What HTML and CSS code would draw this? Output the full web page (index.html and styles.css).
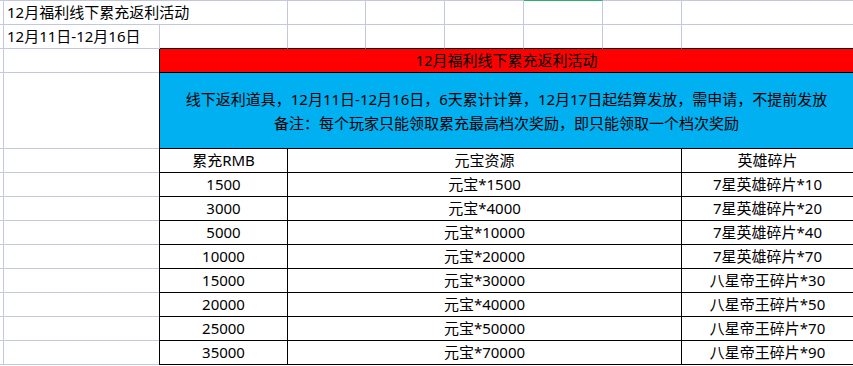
FILE: index.html
```html
<!DOCTYPE html>
<html lang="zh-CN">
<head>
<meta charset="utf-8">
<title>12月福利线下累充返利活动</title>
<link rel="stylesheet" href="styles.css">
</head>
<body>
<div class="sheet">
  <div class="row r1">
    <div class="c gut"></div>
    <div class="c ab txt">12月福利线下累充返利活动</div>
    <div class="c wc"></div>
    <div class="c wd"></div>
    <div class="c wd"></div>
    <div class="c wd sel"></div>
    <div class="c wd"></div>
    <div class="c wh"></div>
  </div>
  <div class="row r2">
    <div class="c gut"></div>
    <div class="c wa txt">12月11日-12月16日</div>
    <div class="c wb blk"></div>
    <div class="c wc blk"></div>
    <div class="c wd blk"></div>
    <div class="c wd blk"></div>
    <div class="c wd blk"></div>
    <div class="c wd blk"></div>
    <div class="c wh blk"></div>
  </div>
  <div class="lower">
    <div class="leftcol">
      <div class="lrow h24"><div class="c gut"></div><div class="c la"></div></div>
      <div class="lrow h76"><div class="c gut"></div><div class="c la"></div></div>
      <div class="lrow h24"><div class="c gut"></div><div class="c la"></div></div>
      <div class="lrow h24"><div class="c gut"></div><div class="c la"></div></div>
      <div class="lrow h24"><div class="c gut"></div><div class="c la"></div></div>
      <div class="lrow h24"><div class="c gut"></div><div class="c la"></div></div>
      <div class="lrow h24"><div class="c gut"></div><div class="c la"></div></div>
      <div class="lrow h24"><div class="c gut"></div><div class="c la"></div></div>
      <div class="lrow h24"><div class="c gut"></div><div class="c la"></div></div>
      <div class="lrow h24"><div class="c gut"></div><div class="c la"></div></div>
      <div class="lrow h24"><div class="c gut"></div><div class="c la"></div></div>
    </div>
    <div class="board">
      <div class="banner red">12月福利线下累充返利活动</div>
      <div class="banner blue">
        <p>线下返利道具<span class="pn">，</span>12月11日-12月16日<span class="pn">，</span>6天累计计算<span class="pn">，</span>12月17日起结算发放<span class="pn">，</span>需申请<span class="pn">，</span>不提前发放</p>
        <p>备注<span class="pn">：</span>每个玩家只能领取累充最高档次奖励<span class="pn">，</span>即只能领取一个档次奖励</p>
      </div>
      <div class="trow"><div class="t1">累充RMB</div><div class="t2">元宝资源</div><div class="t3">英雄碎片</div></div>
      <div class="trow"><div class="t1">1500</div><div class="t2">元宝*1500</div><div class="t3">7星英雄碎片*10</div></div>
      <div class="trow"><div class="t1">3000</div><div class="t2">元宝*4000</div><div class="t3">7星英雄碎片*20</div></div>
      <div class="trow"><div class="t1">5000</div><div class="t2">元宝*10000</div><div class="t3">7星英雄碎片*40</div></div>
      <div class="trow"><div class="t1">10000</div><div class="t2">元宝*20000</div><div class="t3">7星英雄碎片*70</div></div>
      <div class="trow"><div class="t1">15000</div><div class="t2">元宝*30000</div><div class="t3">八星帝王碎片*30</div></div>
      <div class="trow"><div class="t1">20000</div><div class="t2">元宝*40000</div><div class="t3">八星帝王碎片*50</div></div>
      <div class="trow"><div class="t1">25000</div><div class="t2">元宝*50000</div><div class="t3">八星帝王碎片*70</div></div>
      <div class="trow"><div class="t1">35000</div><div class="t2">元宝*70000</div><div class="t3">八星帝王碎片*90</div></div>
    </div>
  </div>
</div>
</body>
</html>
```
FILE: styles.css
```css
* { box-sizing: border-box; }
html, body {
  margin: 0;
  padding: 0;
  background: #ffffff;
}
body {
  width: 853px;
  height: 366px;
  overflow: hidden;
  font-family: "Noto Sans", "Noto Sans CJK SC", sans-serif;
  font-size: 15px;
  color: #000;
}
.sheet {
  display: flex;
  flex-direction: column;
  width: 853px;
}
.row {
  display: flex;
}
.r1 { height: 25px; }
.r2 { height: 24px; }
.r1 .c { border-top: 1px solid #c3c8da; }
.r1 .c.sel { border-top-color: #2bae6e; }
.c {
  border-right: 1px solid #c3c8da;
  border-bottom: 1px solid #c3c8da;
  flex: none;
}
.gut { width: 4px; }
.ab { width: 284px; }
.wa { width: 156px; }
.wb { width: 128px; }
.wc { width: 78px; }
.wd { width: 79px; }
.wh { flex: 1; border-right: none; }
.blk { border-bottom-color: #000; }
.txt {
  display: flex;
  align-items: center;
  padding-left: 3px;
  white-space: nowrap;
  line-height: 1;
}

.lower {
  display: flex;
}
.leftcol {
  width: 159px;
  flex: none;
  display: flex;
  flex-direction: column;
}
.lrow { display: flex; }
.h24 { height: 24px; }
.h76 { height: 76px; }
.la { width: 155px; border-right: none; }
.lrow .gut { height: 100%; }
.lrow .la { height: 100%; }

.board {
  flex: 1;
  border-left: 1px solid #000;
  display: flex;
  flex-direction: column;
}
.banner {
  border-bottom: 1px solid #000;
  display: flex;
  flex-direction: column;
  align-items: center;
  justify-content: center;
  text-align: center;
  white-space: nowrap;
}
.red {
  height: 24px;
  background: #ff0000;
  line-height: 1;
}
.blue {
  height: 76px;
  background: #00b0f0;
}
.blue p {
  margin: 0;
  line-height: 24px;
}
.pn {
  font-family: "Noto Sans CJK TC", "Noto Sans CJK SC", sans-serif;
}
.trow {
  display: flex;
  height: 24px;
  border-bottom: 1px solid #000;
}
.trow > div {
  display: flex;
  align-items: center;
  justify-content: center;
  white-space: nowrap;
  line-height: 1;
}
.t1 { width: 128px; border-right: 1px solid #000; }
.t2 { width: 394px; border-right: 1px solid #000; }
.t3 { flex: 1; }
```
